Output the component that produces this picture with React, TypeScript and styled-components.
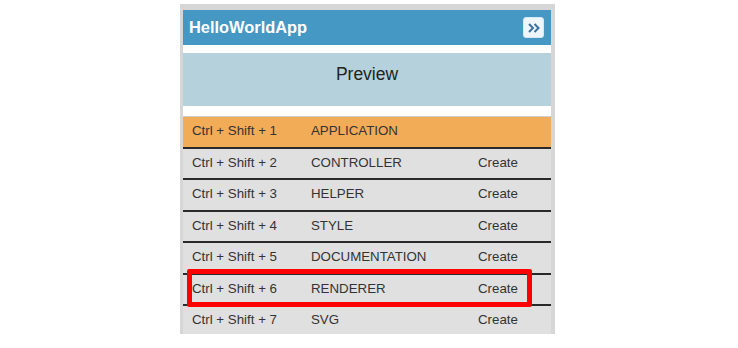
import React from 'react';
import styled, { createGlobalStyle } from 'styled-components';

const GlobalStyle = createGlobalStyle`
  html, body {
    margin: 0;
    padding: 0;
    background: #ffffff;
    font-family: 'Liberation Sans', Arial, sans-serif;
  }
`;

const Page = styled.div`
  width: 738px;
  height: 348px;
  padding: 4px 0 0 180px;
  box-sizing: border-box;
`;

const Panel = styled.div`
  position: relative;
  width: 375px;
  height: 330px;
  box-sizing: border-box;
  padding: 6px 4px 0 3px;
  background: #d6d6d6;
  overflow: hidden;
`;

const Header = styled.div`
  display: flex;
  align-items: center;
  justify-content: space-between;
  height: 35px;
  padding: 0 7px 0 6px;
  background: #4597c4;
`;

const Title = styled.h1`
  margin: 0;
  color: #ffffff;
  font-size: 16.4px;
  font-weight: bold;
`;

const ToggleButton = styled.button`
  display: flex;
  align-items: center;
  justify-content: center;
  width: 21px;
  height: 21px;
  padding: 0;
  border: 1px solid #d7e8f5;
  border-radius: 3px;
  background: #eef6fc;
  cursor: pointer;
`;

const Spacer = styled.div<{ size: number }>`
  height: ${(props) => props.size}px;
  background: #ffffff;
`;

const PreviewBand = styled.div`
  height: 53px;
  padding-top: 11px;
  box-sizing: border-box;
  background: #b5d2dc;
  color: #222;
  font-size: 17.5px;
  line-height: 20px;
  text-align: center;
`;

const Row = styled.div<{ active?: boolean }>`
  display: grid;
  grid-template-columns: 119px 167px 1fr;
  align-items: center;
  height: 29.5px;
  box-sizing: content-box;
  padding: 0 0 0 9px;
  background: ${(props) => (props.active ? '#f2ab56' : '#e0e0e0')};
  border-top: ${(props) => (props.active ? '1px solid #cfcfcf' : 'none')};
  border-bottom: 2px solid #2a2a2a;
  color: #333;
  font-size: 13.3px;
`;

const Cell = styled.span`
  white-space: nowrap;
  margin-top: -2px;
`;

const Highlight = styled.div`
  position: absolute;
  left: 7px;
  top: 265px;
  width: 345px;
  height: 38px;
  box-sizing: border-box;
  border: 5px solid #ff0000;
  border-radius: 2px;
  pointer-events: none;
`;

const rows = [
  { key: '1', name: 'APPLICATION', action: '' },
  { key: '2', name: 'CONTROLLER', action: 'Create' },
  { key: '3', name: 'HELPER', action: 'Create' },
  { key: '4', name: 'STYLE', action: 'Create' },
  { key: '5', name: 'DOCUMENTATION', action: 'Create' },
  { key: '6', name: 'RENDERER', action: 'Create' },
  { key: '7', name: 'SVG', action: 'Create' },
];

const App: React.FC = () => {
  return (
    <Page>
      <GlobalStyle />
      <Panel>
        <Header>
          <Title>HelloWorldApp</Title>
          <ToggleButton>
            <svg width='14' height='12' viewBox='0 0 14 12'>
              <path d='M2 2 L6 6 L2 10 M7.5 2 L11.5 6 L7.5 10' fill='none' stroke='#3b6f9c' strokeWidth='2' />
            </svg>
          </ToggleButton>
        </Header>
        <Spacer size={8} />
        <PreviewBand>Preview</PreviewBand>
        <Spacer size={10} />
        <div>
          {rows.map((row) => (
            <Row key={row.key} active={row.key === '1'}>
              <Cell>Ctrl + Shift + {row.key}</Cell>
              <Cell>{row.name}</Cell>
              <Cell>{row.action}</Cell>
            </Row>
          ))}
        </div>
        <Highlight />
      </Panel>
    </Page>
  );
};

export default App;
